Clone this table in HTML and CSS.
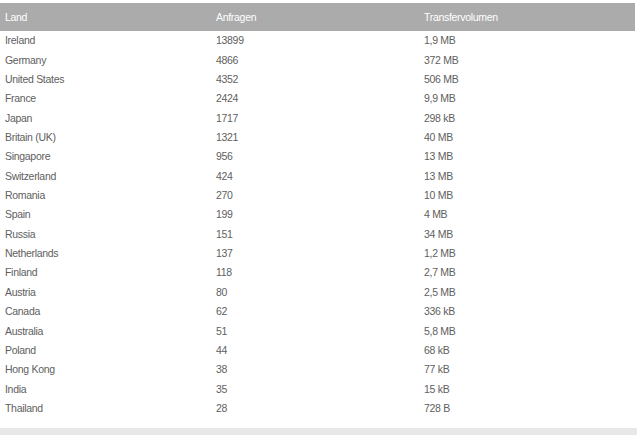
FILE: index.html
```html
<!DOCTYPE html>
<html lang="de">
<head>
<meta charset="utf-8">
<title>Länder</title>
<link rel="stylesheet" href="styles.css">
</head>
<body>
<div class="page">
  <table class="stats">
    <colgroup>
      <col class="c1"><col class="c2"><col class="c3">
    </colgroup>
    <thead>
      <tr><th>Land</th><th>Anfragen</th><th>Transfervolumen</th></tr>
    </thead>
    <tbody>
      <tr><td>Ireland</td><td>13899</td><td>1,9 MB</td></tr>
      <tr><td>Germany</td><td>4866</td><td>372 MB</td></tr>
      <tr><td>United States</td><td>4352</td><td>506 MB</td></tr>
      <tr><td>France</td><td>2424</td><td>9,9 MB</td></tr>
      <tr><td>Japan</td><td>1717</td><td>298 kB</td></tr>
      <tr><td>Britain (UK)</td><td>1321</td><td>40 MB</td></tr>
      <tr><td>Singapore</td><td>956</td><td>13 MB</td></tr>
      <tr><td>Switzerland</td><td>424</td><td>13 MB</td></tr>
      <tr><td>Romania</td><td>270</td><td>10 MB</td></tr>
      <tr><td>Spain</td><td>199</td><td>4 MB</td></tr>
      <tr><td>Russia</td><td>151</td><td>34 MB</td></tr>
      <tr><td>Netherlands</td><td>137</td><td>1,2 MB</td></tr>
      <tr><td>Finland</td><td>118</td><td>2,7 MB</td></tr>
      <tr><td>Austria</td><td>80</td><td>2,5 MB</td></tr>
      <tr><td>Canada</td><td>62</td><td>336 kB</td></tr>
      <tr><td>Australia</td><td>51</td><td>5,8 MB</td></tr>
      <tr><td>Poland</td><td>44</td><td>68 kB</td></tr>
      <tr><td>Hong Kong</td><td>38</td><td>77 kB</td></tr>
      <tr><td>India</td><td>35</td><td>15 kB</td></tr>
      <tr><td>Thailand</td><td>28</td><td>728 B</td></tr>
    </tbody>
  </table>
  <div class="footer-band"></div>
</div>
</body>
</html>
```

FILE: styles.css
```css
html, body {
  margin: 0;
  padding: 0;
  background: #ffffff;
}

.page {
  padding-top: 3px;
  font-family: "Liberation Sans", Arial, sans-serif;
  font-size: 10.5px;
  letter-spacing: -0.3px;
  color: #606060;
}

.stats {
  width: 635px;
  border-collapse: collapse;
  table-layout: fixed;
}

.c1 { width: 211px; }
.c2 { width: 208px; }
.c3 { width: 216px; }

.stats th {
  height: 28px;
  padding: 0 0 0 5px;
  background: #ababab;
  color: #ffffff;
  font-weight: normal;
  text-align: left;
  vertical-align: middle;
}

.stats td {
  height: 18.37px;
  padding: 0 0 1px 5px;
  text-align: left;
  vertical-align: middle;
  line-height: 12px;
}

.footer-band {
  margin-top: 9.6px;
  width: 637px;
  height: 7px;
  background: #e8e8e8;
}
```
